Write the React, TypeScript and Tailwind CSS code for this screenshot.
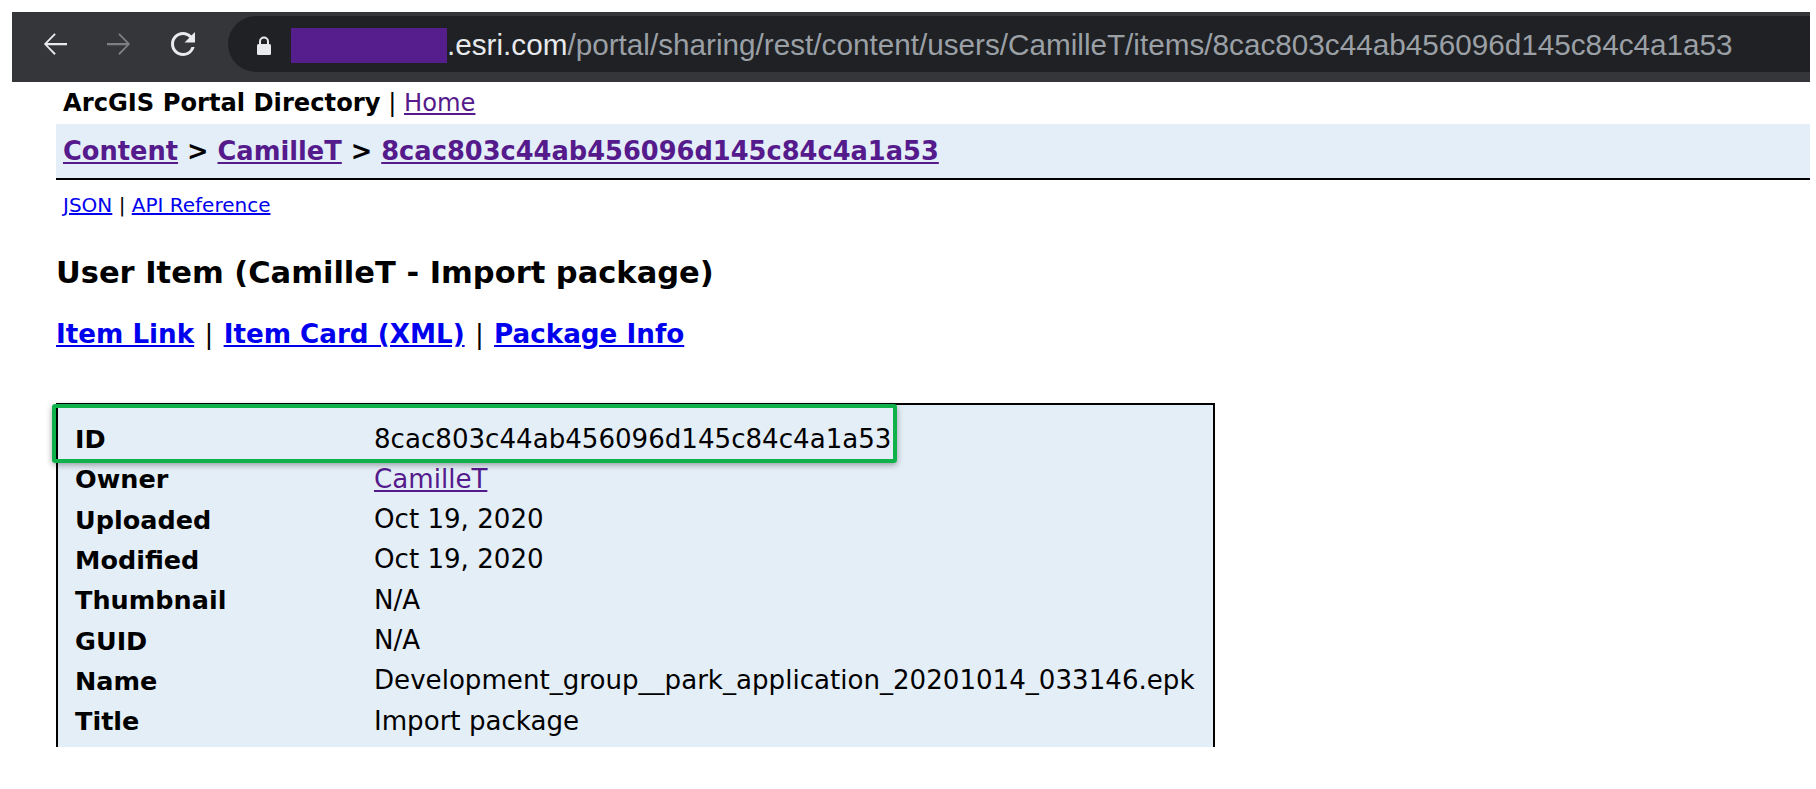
import type { ReactNode } from 'react';

const rows: { label: string; value: ReactNode }[] = [
  { label: 'ID', value: '8cac803c44ab456096d145c84c4a1a53' },
  {
    label: 'Owner',
    value: <a className="text-[#551a8b] underline">CamilleT</a>,
  },
  { label: 'Uploaded', value: 'Oct 19, 2020' },
  { label: 'Modified', value: 'Oct 19, 2020' },
  { label: 'Thumbnail', value: 'N/A' },
  { label: 'GUID', value: 'N/A' },
  { label: 'Name', value: 'Development_group__park_application_20201014_033146.epk' },
  { label: 'Title', value: 'Import package' },
];

function BackIcon({ color }: { color: string }) {
  return (
    <svg width="36" height="36" viewBox="0 0 24 24" fill={color}>
      <path d="M20 11.25H6.9l5.6-5.6-.9-.9L4.6 12l7 7.25.9-.9-5.6-5.6H20v-1.5z" />
    </svg>
  );
}

function ForwardIcon({ color }: { color: string }) {
  return (
    <svg width="36" height="36" viewBox="0 0 24 24" fill={color}>
      <path d="M4 11.25h13.1l-5.6-5.6.9-.9 7 7.25-7 7.25-.9-.9 5.6-5.6H4v-1.5z" />
    </svg>
  );
}

function ReloadIcon() {
  return (
    <svg width="36" height="36" viewBox="0 0 24 24" fill="#e8eaed">
      <path d="M17.65 6.35A7.958 7.958 0 0 0 12 4c-4.42 0-7.99 3.58-7.99 8s3.57 8 7.99 8c3.73 0 6.84-2.55 7.73-6h-2.08A5.99 5.99 0 0 1 12 18c-3.31 0-6-2.690-6-6s2.69-6 6-6c1.66 0 3.14.69 4.22 1.78L13 11h7V4l-2.35 2.35z" />
    </svg>
  );
}

function LockIcon() {
  return (
    <svg width="16" height="19" viewBox="0 0 16 19">
      <path d="M4 8V5.5a4 4 0 0 1 8 0V8" fill="none" stroke="#e8eaed" strokeWidth="2" />
      <rect x="1" y="8" width="14" height="11" rx="1.5" fill="#e8eaed" />
    </svg>
  );
}

export default function App() {
  return (
    <div className="min-h-[789px] bg-white pt-[12px] pl-[12px] pr-[6px]">
      {/* browser toolbar */}
      <div className="flex h-[70px] items-start bg-[#35363a] pt-[4px]">
        <div className="ml-[25px] flex h-[56px] items-center gap-[28px]">
          <BackIcon color="#e8eaed" />
          <ForwardIcon color="#7e7f82" />
          <ReloadIcon />
        </div>
        <div className="ml-[27px] flex h-[56px] flex-1 items-center rounded-l-full bg-[#202124] font-['Liberation_Sans',Arial,sans-serif] text-[29.7px] leading-none">
          <div className="ml-[28px] mt-[2px] flex">
            <LockIcon />
          </div>
          <div className="ml-[19px] mt-[3px] h-[35px] w-[156px] bg-[#561d8d]" />
          <span className="mt-[2px] whitespace-nowrap">
            <span className="text-[#e8eaed]">.esri.com</span>
            <span className="text-[#9aa0a6]">/portal/sharing/rest/content/users/CamilleT/items/8cac803c44ab456096d145c84c4a1a53</span>
          </span>
        </div>
      </div>

      {/* page */}
      <div className="pl-[44px] font-['DejaVu_Sans',Verdana,sans-serif] text-black">
        <div className="flex h-[42px] items-center whitespace-pre pl-[7px] text-[24.2px]">
          <b>ArcGIS Portal Directory</b>
          <span> | </span>
          <a className="text-[#551a8b] underline">Home</a>
        </div>

        <div className="flex h-[56px] items-center whitespace-pre border-b-2 border-black bg-[#e4eef8] pl-[7px] text-[25.7px] font-bold">
          <a className="text-[#551a8b] underline">Content</a>
          <span> &gt; </span>
          <a className="text-[#551a8b] underline">CamilleT</a>
          <span> &gt; </span>
          <a className="text-[#551a8b] underline">8cac803c44ab456096d145c84c4a1a53</a>
        </div>

        <div className="flex h-[50px] items-center whitespace-pre pl-[7px] text-[20px]">
          <a className="text-[#0000ee] underline">JSON</a>
          <span> | </span>
          <a className="text-[#0000ee] underline">API Reference</a>
        </div>

        <h2 className="flex h-[86px] items-center text-[30.5px] font-bold">User Item (CamilleT - Import package)</h2>

        <div className="flex h-[38px] items-center whitespace-pre text-[26.2px]">
          <a className="font-bold text-[#0000ee] underline">Item Link</a>
          <span className="px-[2px]"> | </span>
          <a className="font-bold text-[#0000ee] underline">Item Card (XML)</a>
          <span className="px-[2px]"> | </span>
          <a className="font-bold text-[#0000ee] underline">Package Info</a>
        </div>

        <div className="relative mt-[49px] w-[1159px] border-2 border-b-0 border-black bg-[#e4eef7] pt-[14px] pb-[6px]">
          {rows.map((row) => (
            <div key={row.label} className="flex h-[40.3px] items-center pl-[17px] text-[25.5px]">
              <div className="w-[299px] font-bold">{row.label}</div>
              <div className="whitespace-nowrap text-[26.1px]">{row.value}</div>
            </div>
          ))}
          {/* highlight annotation */}
          <div className="absolute left-[-6px] top-[-1px] h-[59px] w-[845px] rounded-[3px] border-[4.5px] border-[#0fb14b] shadow-[0_2px_6px_rgba(0,0,0,0.35)]" />
        </div>
      </div>
    </div>
  );
}
